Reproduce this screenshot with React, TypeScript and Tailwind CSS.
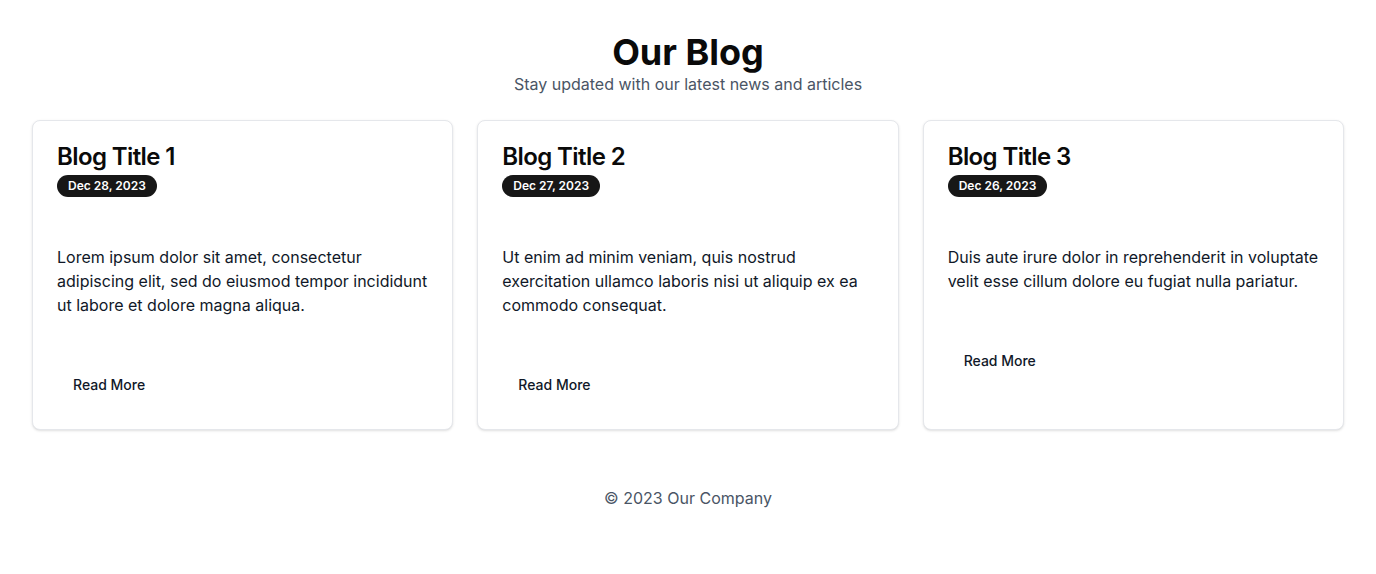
const posts = [
  {
    title: "Blog Title 1",
    date: "Dec 28, 2023",
    excerpt:
      "Lorem ipsum dolor sit amet, consectetur adipiscing elit, sed do eiusmod tempor incididunt ut labore et dolore magna aliqua.",
  },
  {
    title: "Blog Title 2",
    date: "Dec 27, 2023",
    excerpt:
      "Ut enim ad minim veniam, quis nostrud exercitation ullamco laboris nisi ut aliquip ex ea commodo consequat.",
  },
  {
    title: "Blog Title 3",
    date: "Dec 26, 2023",
    excerpt:
      "Duis aute irure dolor in reprehenderit in voluptate velit esse cillum dolore eu fugiat nulla pariatur.",
  },
];

export default function App() {
  return (
    <div className="min-h-screen bg-white px-8 pt-8 font-['Inter',sans-serif] text-[#0a0a0a]">
      <header className="mb-6 text-center">
        <h1 className="text-4xl font-bold">Our Blog</h1>
        <p className="text-base text-gray-600">
          Stay updated with our latest news and articles
        </p>
      </header>

      <main className="grid grid-cols-3 gap-6">
        {posts.map((post) => (
          <div
            key={post.title}
            className="flex flex-col rounded-lg border border-gray-200 bg-white shadow-sm"
          >
            <div className="flex flex-col items-start gap-1.5 p-6">
              <h2 className="text-2xl leading-none font-semibold tracking-tight">
                {post.title}
              </h2>
              <span className="rounded-full border border-transparent bg-[#171717] px-2.5 py-0.5 text-xs font-semibold text-white">
                {post.date}
              </span>
            </div>
            <div className="p-6">
              <p className="text-base text-gray-900">{post.excerpt}</p>
            </div>
            <div className="p-6">
              <button
                type="button"
                className="h-10 rounded-md px-4 text-sm font-medium text-gray-900 hover:bg-gray-100"
              >
                Read More
              </button>
            </div>
          </div>
        ))}
      </main>

      <footer className="mt-14 text-center text-base text-gray-600">
        © 2023 Our Company
      </footer>
    </div>
  );
}
